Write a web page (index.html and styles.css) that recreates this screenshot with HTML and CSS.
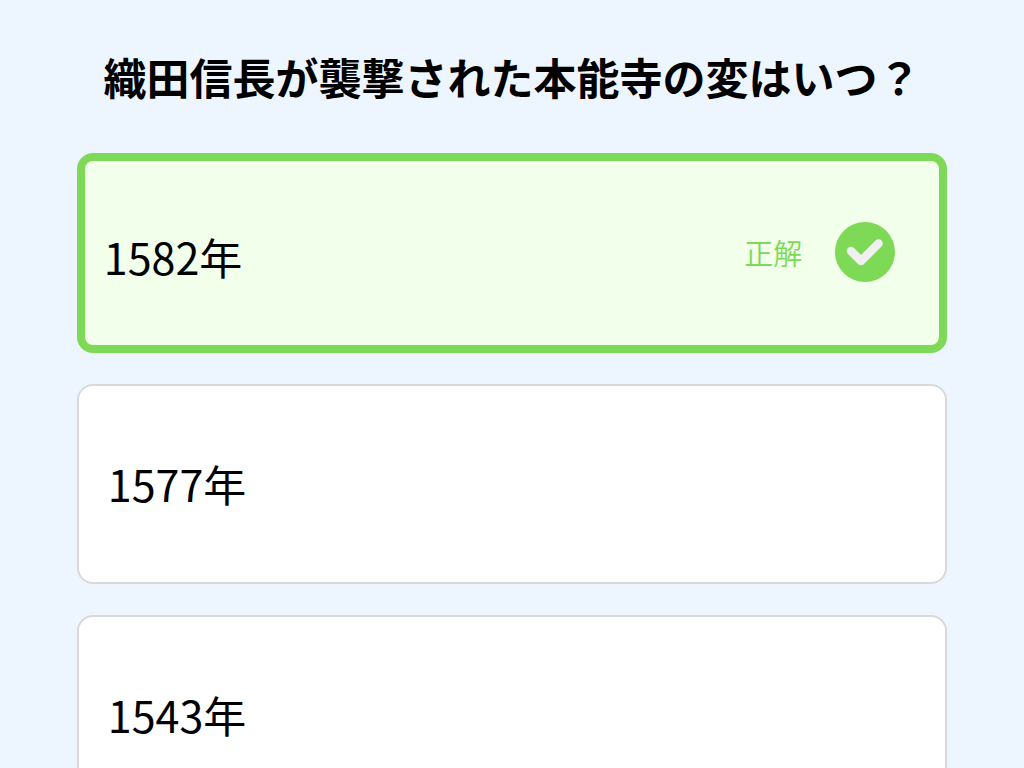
FILE: index.html
```
<!DOCTYPE html>
<html lang="ja">
<head>
  <meta charset="UTF-8" />
  <meta name="viewport" content="width=device-width, initial-scale=1.0"/>
  <title>歴史クイズ</title>
  <link rel="stylesheet" href="styles.css">
</head>
<body>
  <main class="quiz">
    <h1>織田信長が襲撃された本能寺の変はいつ？</h1>

    <div class="options">
      <button type="button" class="option correct">
        <span class="answer">1582年</span>
        <span class="result">正解</span>
        <svg class="check" viewBox="0 0 60 60" aria-hidden="true">
          <circle cx="30" cy="30" r="30" fill="#7ed957"/>
          <path d="M16 29 L26 39 L43.5 21.5" fill="none" stroke="#f0f0f0" stroke-width="8.5" stroke-linecap="round" stroke-linejoin="round"/>
        </svg>
      </button>

      <button type="button" class="option">
        <span class="answer">1577年</span>
      </button>

      <button type="button" class="option">
        <span class="answer">1543年</span>
      </button>
    </div>
  </main>
</body>
</html>
```

FILE: styles.css
```
* {
  box-sizing: border-box;
}

body {
  margin: 0;
  background: #edf5ff;
  font-family: 'Noto Sans CJK JP', sans-serif;
  color: #000;
}

.quiz {
  width: 85%;
  margin: 0 auto;
  padding: 44px 0 32px;
}

h1 {
  margin: 0 0 45px;
  font-size: 43px;
  line-height: 64px;
  font-weight: bold;
  text-align: center;
}

.options {
  display: grid;
  gap: 31px;
}

.option {
  display: flex;
  align-items: center;
  width: 100%;
  min-height: 200px;
  padding: 0 44px 2px 29px;
  border: 2px solid #d9d9d9;
  border-radius: 16px;
  background: #fff;
  color: inherit;
  font-family: inherit;
  text-align: left;
  cursor: pointer;
}

.option.correct {
  padding-left: 19px;
  border: 8px solid #7ed957;
  background: #f1ffeb;
}

.answer {
  font-size: 43px;
  line-height: 64px;
}

.correct .answer {
  padding-top: 8px;
}

.result {
  margin-left: auto;
  color: #7ed957;
  font-size: 29px;
  font-weight: 350;
}

.check {
  width: 60px;
  height: 60px;
  margin-left: 33px;
}
```
